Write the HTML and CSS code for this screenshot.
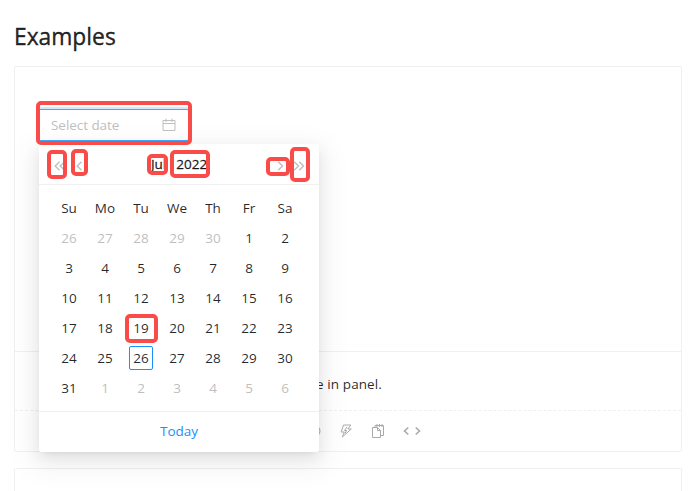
FILE: index.html
```html
<!DOCTYPE html>
<html lang="en">
<head>
<meta charset="utf-8">
<title>Examples</title>
<link rel="stylesheet" href="styles.css">
</head>
<body>
<main class="page">
  <h2 class="title"><span>Examples</span></h2>
  <section class="card">
    <div class="demo">
      <div class="picker">
        <span class="placeholder">Select date</span>
        <svg class="calendar-icon" viewBox="0 0 14 14"><path d="M1 2.5h12v10H1zM1 5.5h12M4 .5v3.500M10 .5v3.500"/></svg>
        <div class="dropdown">
          <div class="header">
            <svg class="chev super-prev" viewBox="0 0 12 10"><path d="M5.500 .8 1.200 5l4.300 4.200M10.500 .8 6.200 5l4.300 4.200"/></svg>
            <svg class="chev prev" viewBox="0 0 7 10"><path d="M5.500 .8 1.200 5l4.300 4.200"/></svg>
            <div class="month-year"><b class="month">Jul</b><b class="year">2022</b></div>
            <svg class="chev next" viewBox="0 0 7 10"><path d="M1.200 .8 5.500 5 1.200 9.200"/></svg>
            <svg class="chev super-next" viewBox="0 0 12 10"><path d="M1.200 .8 5.500 5 1.200 9.200M6.200 .8 10.500 5 6.200 9.200"/></svg>
          </div>
          <div class="days">
            <span>Su</span><span>Mo</span><span>Tu</span><span>We</span><span>Th</span><span>Fr</span><span>Sa</span>
            <span class="out">26</span><span class="out">27</span><span class="out">28</span><span class="out">29</span><span class="out">30</span><span>1</span><span>2</span>
            <span>3</span><span>4</span><span>5</span><span>6</span><span>7</span><span>8</span><span>9</span>
            <span>10</span><span>11</span><span>12</span><span>13</span><span>14</span><span>15</span><span>16</span>
            <span>17</span><span>18</span><span>19</span><span>20</span><span>21</span><span>22</span><span>23</span>
            <span>24</span><span>25</span><span class="today">26</span><span>27</span><span>28</span><span>29</span><span>30</span>
            <span>31</span><span class="out">1</span><span class="out">2</span><span class="out">3</span><span class="out">4</span><span class="out">5</span><span class="out">6</span>
          </div>
          <div class="footer"><span>Today</span></div>
        </div>
      </div>
    </div>
    <div class="description"><span>e in panel.</span></div>
    <div class="actions">
      <svg viewBox="0 0 14 14"><circle cx="7" cy="7" r="6"/><path d="M7 4.500h3.500v5H7"/></svg>
      <svg viewBox="0 0 14 14"><path d="M4.500 1h7.300L8.800 5h3.500L3.300 13 5.300 8H2.200z"/><path d="M8 3 5.500 6.500h2L6 9.500"/></svg>
      <svg viewBox="0 0 14 14"><path d="M1.500 3.500h5l3 3v7h-8zM6.500 3.500v3h3M4 3V1.500h8.500v10H10M6 0v3M8.500 0v3M11 0v3"/></svg>
      <svg class="code" viewBox="0 0 18 14"><path d="M5.300 3.500 1.500 7l3.800 3.500M12.700 3.500 16.500 7l-3.800 3.500"/></svg>
    </div>
  </section>
  <section class="card next-card"></section>
</main>
<i class="mark mark-input"></i>
<i class="mark mark-super-prev"></i>
<i class="mark mark-prev"></i>
<i class="mark mark-month"></i>
<i class="mark mark-year"></i>
<i class="mark mark-next"></i>
<i class="mark mark-super-next"></i>
<i class="mark mark-day"></i>
</body>
</html>
```
FILE: styles.css
```css
* { box-sizing: border-box; }
body {
  margin: 0;
  height: 491px;
  overflow: hidden;
  background: #fff;
  color: rgba(0, 0, 0, .85);
  font: 13.5px/22px "Open Sans", "Noto Sans", sans-serif;
}
.page { padding: 21px 15px 0 14px; }
.title {
  margin: 0 0 13px;
  font-size: 22.8px;
  font-weight: 500;
  line-height: 31px;
  padding-bottom: 1px;
  -webkit-text-stroke: .4px currentColor;
}
.card {
  height: 386px;
  border: 1px solid #f0f0f0;
  border-radius: 2px;
  margin-bottom: 16px;
  display: flex;
  flex-direction: column;
}
.next-card {
  height: 23px;
  margin-bottom: 0;
  border-bottom: 0;
  border-radius: 2px 2px 0 0;
}
.demo {
  height: 285px;
  padding: 42px 23px 0;
  border-bottom: 1px solid #f0f0f0;
}
.picker {
  position: relative;
  width: 151px;
  height: 32px;
  padding: 0 12px;
  display: flex;
  align-items: center;
  justify-content: space-between;
  border: 1px solid #40a9ff;
  border-radius: 2px;
  box-shadow: 0 0 0 2px rgba(24, 144, 255, .2);
}
.placeholder { color: #bfbfbf; letter-spacing: -.05px; }
svg { fill: none; stroke: #bfbfbf; flex: none; }
.calendar-icon { width: 14px; height: 14px; }
.dropdown {
  position: absolute;
  z-index: 1;
  left: 0;
  top: 34px;
  width: 280px;
  height: 308px;
  background: #fff;
  border-radius: 2px;
  box-shadow: 0 3px 6px -4px rgba(0, 0, 0, .12), 0 6px 16px rgba(0, 0, 0, .08), 0 9px 28px 8px rgba(0, 0, 0, .05);
}
.header {
  height: 41px;
  display: flex;
  align-items: center;
  padding: 0 14px 0 15px;
  border-bottom: 1px solid #f0f0f0;
}
.chev { height: 10px; stroke-width: 1.4; margin-top: 3px; }
.super-prev, .super-next { width: 12px; }
.prev, .next { width: 7px; }
.prev { margin-left: 10px; }
.next { margin-right: 9px; }
.month-year {
  flex: 1;
  display: flex;
  justify-content: center;
  gap: 10px;
  padding-right: 2px;
}
.month-year b { font-weight: 500; -webkit-text-stroke: .3px currentColor; }
.days {
  height: 226px;
  padding: 8px 16px 8px 12px;
  display: grid;
  grid-template-columns: repeat(7, 36px);
  grid-template-rows: repeat(7, 30px);
  place-items: center;
}
.out { color: #bfbfbf; }
.today {
  width: 24px;
  height: 24px;
  line-height: 22px;
  text-align: center;
  border: 1px solid #1890ff;
  border-radius: 2px;
}
.footer {
  height: 41px;
  line-height: 38px;
  border-top: 1px solid #f0f0f0;
  text-align: center;
  color: #1890ff;
}
.description {
  height: 59px;
  padding: 21px 24px 0 301px;
  border-bottom: 1px dashed #f0f0f0;
  letter-spacing: .1px;
}
.actions {
  flex: 1;
  display: flex;
  align-items: center;
  justify-content: center;
  gap: 18px;
  padding-left: 32px;
}
.actions svg { width: 14px; height: 14px; stroke: #aaa; }
.actions .code { width: 18px; stroke-width: 1.6; }
.mark {
  position: absolute;
  z-index: 2;
  border: 4px solid #f94b47;
  border-radius: 5px;
}
.mark-input { left: 36px; top: 101px; width: 156px; height: 44px; }
.mark-super-prev { left: 47px; top: 150px; width: 20px; height: 29px; }
.mark-prev { left: 71px; top: 149px; width: 17px; height: 27px; }
.mark-month { left: 147px; top: 154px; width: 21px; height: 21px; }
.mark-year { left: 170px; top: 150px; width: 40px; height: 28px; }
.mark-next { left: 266px; top: 157px; width: 24px; height: 19px; }
.mark-super-next { left: 290px; top: 147px; width: 20px; height: 35px; }
.mark-day { left: 125px; top: 314px; width: 33px; height: 29px; }
```
